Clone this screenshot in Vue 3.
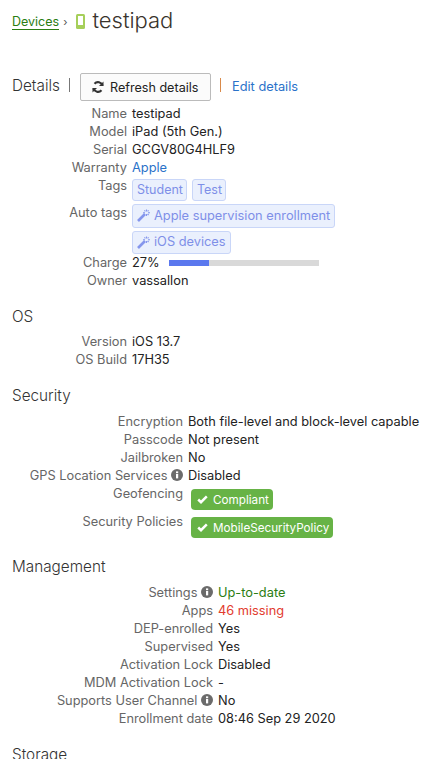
<script setup>
const details = [
  { label: "Name", value: "testipad" },
  { label: "Model", value: "iPad (5th Gen.)" },
  { label: "Serial", value: "GCGV80G4HLF9" },
  { label: "Warranty", value: "Apple", cls: "link" },
];
const os = [
  { label: "Version", value: "iOS 13.7" },
  { label: "OS Build", value: "17H35" },
];
const security = [
  { label: "Encryption", value: "Both file-level and block-level capable" },
  { label: "Passcode", value: "Not present" },
  { label: "Jailbroken", value: "No" },
  { label: "GPS Location Services", value: "Disabled", info: true },
];
const policies = [
  { label: "Geofencing", value: "Compliant" },
  { label: "Security Policies", value: "MobileSecurityPolicy" },
];
const management = [
  { label: "Settings", value: "Up-to-date", info: true, cls: "ok" },
  { label: "Apps", value: "46 missing", cls: "bad" },
  { label: "DEP-enrolled", value: "Yes" },
  { label: "Supervised", value: "Yes" },
  { label: "Activation Lock", value: "Disabled" },
  { label: "MDM Activation Lock", value: "-" },
  { label: "Supports User Channel", value: "No", info: true },
  { label: "Enrollment date", value: "08:46 Sep 29 2020" },
];
</script>

<template>
  <div class="page">
    <div class="crumbs">
      <a class="devices">Devices</a>
      <span class="sep">›</span>
      <svg class="phone" width="9" height="15" viewBox="0 0 9 15">
        <rect x="0" y="0" width="9" height="15" rx="1.5" fill="#a6cf5a" />
        <rect x="2" y="2" width="5" height="9" fill="#fff" />
      </svg>
      <h1>testipad</h1>
    </div>

    <div class="details-bar">
      <span class="heading">Details</span>
      <span class="bar"></span>
      <button class="refresh">
        <svg width="12" height="12" viewBox="0 0 12 12">
          <path d="M10.6 4.6A4.8 4.8 0 0 0 2.5 2.7" fill="none" stroke="#333" stroke-width="2.1" />
          <path d="M1.4 7.4A4.8 4.8 0 0 0 9.5 9.3" fill="none" stroke="#333" stroke-width="2.1" />
          <path d="M11.5 0.5V5H7z" fill="#333" />
          <path d="M0.5 11.5V7H5z" fill="#333" />
        </svg>
        Refresh details
      </button>
      <span class="bar orange"></span>
      <a class="link edit">Edit details</a>
    </div>

    <div class="rows first" style="--label: 127px">
      <template v-for="row in details" :key="row.label">
        <div class="label">{{ row.label }}</div>
        <div class="value" :class="row.cls">{{ row.value }}</div>
      </template>
      <div class="label">Tags</div>
      <div class="tags">
        <span class="tag plain">Student</span>
        <span class="tag plain">Test</span>
      </div>
      <div class="label">Auto tags</div>
      <div class="tags column">
        <span class="tag" v-for="t in ['Apple supervision enrollment', 'iOS devices']" :key="t">
          <svg width="13" height="13" viewBox="0 0 13 13">
            <path d="M1 12 L8 5" stroke="#8596ec" stroke-width="2.6" fill="none" />
            <path d="M9.5 0.5v2M9.5 5v2M6 3.7h2M11 3.7h2M11.6 1.3l-1 1M11.6 6l-1-1M7.4 1.3l1 1" stroke="#8596ec" stroke-width="1.1" fill="none" />
          </svg>
          {{ t }}
        </span>
      </div>
      <div class="label">Charge</div>
      <div class="value charge">
        27%
        <div class="track"><div class="fill" :style="{ width: '27%' }"></div></div>
      </div>
      <div class="label">Owner</div>
      <div class="value">vassallon</div>
    </div>

    <h2>OS</h2>
    <div class="rows" style="--label: 127px">
      <template v-for="row in os" :key="row.label">
        <div class="label">{{ row.label }}</div>
        <div class="value">{{ row.value }}</div>
      </template>
    </div>

    <h2>Security</h2>
    <div class="rows lower" style="--label: 183px">
      <template v-for="row in security" :key="row.label">
        <div class="label">
          {{ row.label }}
          <svg v-if="row.info" class="info" width="12" height="12" viewBox="0 0 12 12">
            <circle cx="6" cy="6" r="6" fill="#6b6b6b" />
            <rect x="5" y="5" width="2.2" height="4.4" fill="#fff" />
            <rect x="5" y="2.4" width="2.2" height="1.8" fill="#fff" />
          </svg>
        </div>
        <div class="value" :class="row.cls">{{ row.value }}</div>
      </template>
      <template v-for="row in policies" :key="row.label">
        <div class="label">{{ row.label }}</div>
        <div class="policy">
          <span class="pill">
            <svg width="11" height="9" viewBox="0 0 11 9">
              <path d="M1.2 4.5 L4 7.2 L9.8 1.4" fill="none" stroke="#fff" stroke-width="2.5" />
            </svg>
            {{ row.value }}
          </span>
        </div>
      </template>
    </div>

    <h2 class="mgmt">Management</h2>
    <div class="rows lower" style="--label: 213px">
      <template v-for="row in management" :key="row.label">
        <div class="label">
          {{ row.label }}
          <svg v-if="row.info" class="info" width="12" height="12" viewBox="0 0 12 12">
            <circle cx="6" cy="6" r="6" fill="#6b6b6b" />
            <rect x="5" y="5" width="2.2" height="4.4" fill="#fff" />
            <rect x="5" y="2.4" width="2.2" height="1.8" fill="#fff" />
          </svg>
        </div>
        <div class="value" :class="row.cls">{{ row.value }}</div>
      </template>
    </div>

    <h2>Storage</h2>
  </div>
</template>

<style>
html,
body {
  margin: 0;
  background: #fff;
}
</style>

<style scoped>
.page {
  height: 759px;
  overflow: hidden;
  padding: 8px 0 0 12px;
  box-sizing: border-box;
  font-family: Inter, "Liberation Sans", Arial, sans-serif;
  font-size: 12.8px;
  color: #222;
}
.crumbs {
  display: flex;
  align-items: center;
  height: 26px;
}
.devices {
  color: #2b7d12;
  border-bottom: 1px solid #2b7d12;
  line-height: 14px;
  margin-top: 3px;
  font-size: 12.5px;
}
.sep {
  margin: 2px 9px 0 4px;
  font-size: 11px;
  color: #555;
}
.phone {
  margin-right: 7px;
}
h1 {
  margin: -2px 0 0;
  font-size: 22px;
  font-weight: 300;
  color: #39332c;
}
.details-bar {
  display: flex;
  align-items: center;
  margin-top: 36px;
  height: 30px;
}
.heading {
  font-size: 15.3px;
  font-weight: 300;
  color: #333;
}
.bar {
  width: 1px;
  height: 14px;
  background: #777;
  margin: 0 0 0 9px;
}
.bar.orange {
  background: #d98a4a;
  margin: 0 11px 0 9px;
}
.refresh {
  display: flex;
  align-items: center;
  gap: 6px;
  height: 28px;
  width: 131px;
  margin: 4px 0 0 10px;
  padding: 0 0 0 11px;
  border: 1px solid #bbb;
  border-radius: 2px;
  background: #fbfbfb;
  font: inherit;
  font-size: 12.6px;
  color: #222;
}
.link {
  color: #2a72c9;
}
.edit {
  margin-top: 2px;
}
.rows {
  display: grid;
  grid-template-columns: calc(var(--label) - 12px) 1fr;
  column-gap: 5px;
  grid-auto-rows: minmax(18px, auto);
  line-height: 18px;
}
.rows.first {
  margin-top: 5px;
}
.rows.lower {
  margin-top: 7px;
}
.label {
  text-align: right;
  color: #666;
  white-space: nowrap;
}
.value {
  white-space: nowrap;
}
.ok {
  color: #2b7d12;
}
.bad {
  color: #e23b2e;
}
.info {
  vertical-align: -1px;
}
.tags {
  display: flex;
  gap: 5px;
  padding: 2px 0 3px;
}
.tags.column {
  flex-direction: column;
  align-items: flex-start;
  gap: 3px;
  padding: 0;
}
.tag {
  display: inline-flex;
  align-items: center;
  gap: 4px;
  height: 21.5px;
  padding: 0 4px;
  border: 1px solid #c9d6f8;
  border-radius: 3px;
  background: #eaf0fd;
  color: #7e8fe8;
}
.tag.plain {
  height: 20px;
  padding: 0 3px 0 4px;
  font-size: 12.5px;
}
.charge {
  display: flex;
  align-items: center;
  gap: 9px;
}
.track {
  width: 150px;
  height: 6px;
  background: #d9d9d9;
}
.fill {
  height: 100%;
  background: #5b78ee;
}
h2 {
  margin: 17px 0 6px;
  font-size: 15.3px;
  font-weight: 300;
  line-height: 20px;
  color: #333;
}
h2.mgmt {
  margin-top: 16px;
}
.policy {
  display: flex;
  padding: 4px 0 3px 3px;
}
.pill {
  display: inline-flex;
  align-items: center;
  gap: 5px;
  height: 21px;
  padding: 0 4px 0 6px;
  border-radius: 4px;
  background: #67b346;
  color: #fff;
  font-size: 11.7px;
}
</style>
